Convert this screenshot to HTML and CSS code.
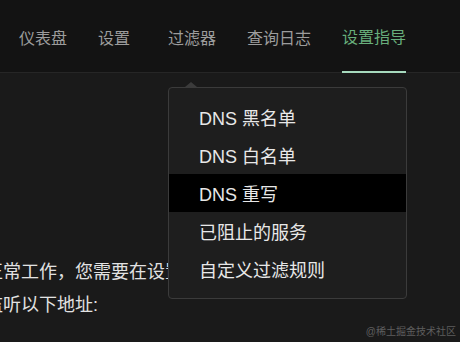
FILE: index.html
```html
<!DOCTYPE html>
<html lang="zh-CN">
<head>
  <meta charset="UTF-8">
  <title>AdGuard Home</title>
  <link rel="stylesheet" href="styles.css">
</head>
<body>
  <div class="header">
    <nav class="nav">
      <a class="nav-link" href="#">仪表盘</a>
      <a class="nav-link" href="#">设置</a>
      <a class="nav-link nav-link-drop" href="#">过滤器</a>
      <a class="nav-link" href="#">查询日志</a>
      <a class="nav-link active" href="#">设置指导</a>
    </nav>
  </div>

  <div class="content">
    <p class="intro">正常工作，您需要在设置中配置 DNS 服务器<br>监听以下地址:</p>
  </div>

  <div class="dropdown">
    <a class="dropdown-item" href="#">DNS 黑名单</a>
    <a class="dropdown-item" href="#">DNS 白名单</a>
    <a class="dropdown-item selected" href="#">DNS 重写</a>
    <a class="dropdown-item" href="#">已阻止的服务</a>
    <a class="dropdown-item" href="#">自定义过滤规则</a>
  </div>

  <div class="watermark">@稀土掘金技术社区</div>
</body>
</html>
```

FILE: styles.css
```css
body {
  margin: 0;
  background-color: #1a1a1a;
  color: #e2e2e2;
  font-family: "Liberation Sans", "Noto Sans CJK SC", sans-serif;
  overflow: hidden;
  height: 342px;
}
.header {
  background-color: #131313;
  height: 72px;
  border-bottom: 1px solid #262626;
}
.nav {
  display: flex;
  height: 100%;
  padding-left: 19px;
  gap: 31px;
}
.nav-link {
  display: flex;
  align-items: center;
  height: 100%;
  box-sizing: border-box;
  padding-top: 1px;
  font-size: 16px;
  color: #9c9c9c;
  text-decoration: none;
}
.nav-link-drop {
  margin-left: 7px;
}
.nav-link.active {
  color: #68ae7c;
  border-bottom: 2px solid #a6d9bd;
  margin-bottom: -1px;
  padding-top: 1px;
  height: 73px;
}
.content {
  padding-top: 183px;
}
.intro {
  margin: 0 0 0 -15px;
  font-size: 18px;
  line-height: 33px;
  white-space: nowrap;
}
.dropdown {
  position: absolute;
  left: 168px;
  top: 87px;
  width: 237px;
  height: 190px;
  padding: 10px 0 10px;
  background-color: #1e1e1e;
  border: 1px solid #3b3b3b;
  border-radius: 4px;
}
.dropdown::before {
  content: "";
  position: absolute;
  left: 16px;
  top: -6px;
  border-left: 6px solid transparent;
  border-right: 6px solid transparent;
  border-bottom: 5px solid #3b3b3b;
}
.dropdown-item {
  display: flex;
  align-items: center;
  height: 38px;
  padding-left: 30px;
  font-size: 18px;
  color: #e8e8e8;
  text-decoration: none;
}
.dropdown-item.selected {
  background-color: #000;
}
.watermark {
  position: absolute;
  right: 4px;
  bottom: 4px;
  font-size: 10px;
  color: #5e5e5e;
}
```
